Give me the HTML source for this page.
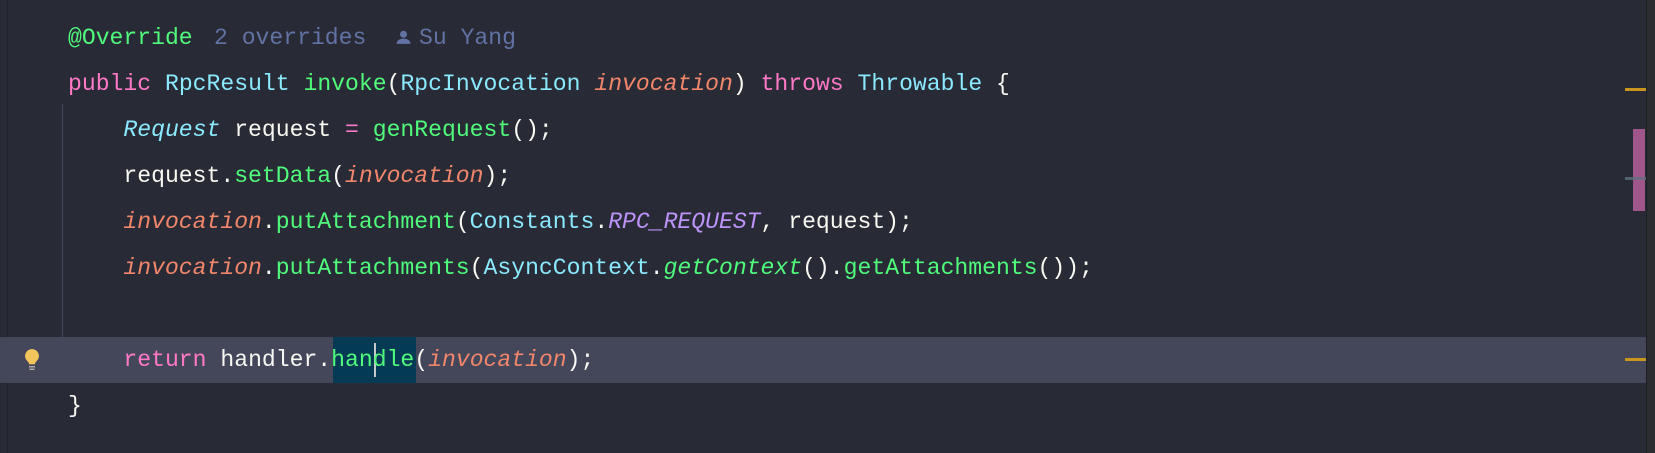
<!DOCTYPE html>
<html><head><meta charset="utf-8"><style>
html,body{margin:0;padding:0}
body{width:1655px;height:453px;background:#282a36;position:relative;overflow:hidden;font-family:"Liberation Mono",monospace;font-size:23.08px;color:#f8f8f2}
.row{position:absolute;left:68px;height:46px;line-height:46px;white-space:pre}
.k{color:#ff79c6}.t{color:#8be9fd}.f{color:#50fa7b}.p{color:#f1866a;font-style:italic}.c{color:#bd93f9;font-style:italic}.g{color:#6272a4}.i{font-style:italic}
</style></head><body>
<div style="position:absolute;left:7px;top:0;width:1px;height:453px;background:#1f2029"></div>
<div style="position:absolute;left:0;top:337px;width:1646px;height:46px;background:#44475a"></div>
<div style="position:absolute;left:62px;top:104px;width:1px;height:279px;background:#44475a"></div>
<div style="position:absolute;left:333px;top:337px;width:83px;height:46px;background:#053a55"></div>
<div style="position:absolute;left:374px;top:343px;width:2px;height:34px;background:#c8c8c8"></div>
<svg style="position:absolute;left:24px;top:348px" width="16" height="24" viewBox="0 0 16 24"><path d="M8 1a7 7 0 0 0-4.5 12.3c1 1 1.5 2 1.5 3h6c0-1 .5-2 1.5-3A7 7 0 0 0 8 1z" fill="#f2c55c"/><rect x="5" y="18" width="6" height="1.5" fill="#aaa"/><rect x="5.5" y="20.5" width="5" height="1.5" fill="#aaa"/></svg>
<div class="row" style="top:15px"><span class="f">@Override</span></div>
<div class="row g" style="top:15px;left:214px">2 overrides</div>
<svg style="position:absolute;left:395px;top:29px" width="17" height="17" viewBox="0 0 16 16"><circle cx="8" cy="5" r="3.3" fill="#6272a4"/><path d="M1.5 14c0-3.5 3-5 6.5-5s6.5 1.5 6.5 5z" fill="#6272a4"/></svg>
<div class="row g" style="top:15px;left:419px">Su Yang</div>
<div class="row" style="top:61px"><span class="k">public</span> <span class="t">RpcResult</span> <span class="f">invoke</span>(<span class="t">RpcInvocation</span> <span class="p">invocation</span>) <span class="k">throws</span> <span class="t">Throwable</span> {</div>
<div class="row" style="top:107px">    <span class="t i">Request</span> request <span class="k">=</span> <span class="f">genRequest</span>();</div>
<div class="row" style="top:153px">    request.<span class="f">setData</span>(<span class="p">invocation</span>);</div>
<div class="row" style="top:199px">    <span class="p">invocation</span>.<span class="f">putAttachment</span>(<span class="t">Constants</span>.<span class="c">RPC_REQUEST</span>, request);</div>
<div class="row" style="top:245px">    <span class="p">invocation</span>.<span class="f">putAttachments</span>(<span class="t">AsyncContext</span>.<span class="f i">getContext</span>().<span class="f">getAttachments</span>());</div>
<div class="row" style="top:337px">    <span class="k">return</span> handler.<span class="f">handle</span>(<span class="p">invocation</span>);</div>
<div class="row" style="top:383px">}</div>
<div style="position:absolute;left:1625px;top:88px;width:21px;height:3px;background:#c8961c"></div>
<div style="position:absolute;left:1625px;top:358px;width:21px;height:3px;background:#c8961c"></div>
<div style="position:absolute;left:1633px;top:129px;width:12px;height:82px;background:#a0568a"></div>
<div style="position:absolute;left:1625px;top:177px;width:21px;height:3px;background:#5f7080;opacity:.8"></div>
<div style="position:absolute;left:1646px;top:0;width:9px;height:453px;background:#2b2d30;border-left:1px solid #1e1f22"></div>
</body></html>
